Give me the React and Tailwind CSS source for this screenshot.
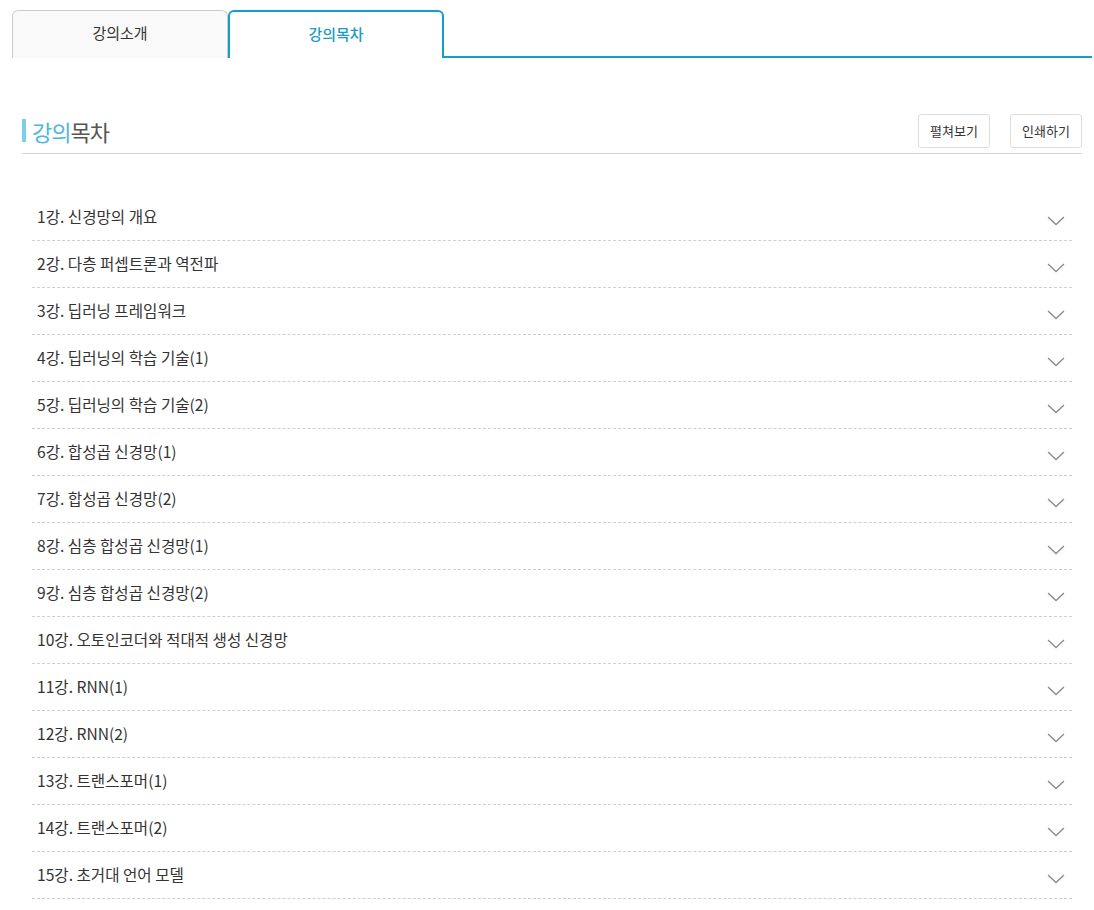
const LECTURES = [
  '1강. 신경망의 개요',
  '2강. 다층 퍼셉트론과 역전파',
  '3강. 딥러닝 프레임워크',
  '4강. 딥러닝의 학습 기술(1)',
  '5강. 딥러닝의 학습 기술(2)',
  '6강. 합성곱 신경망(1)',
  '7강. 합성곱 신경망(2)',
  '8강. 심층 합성곱 신경망(1)',
  '9강. 심층 합성곱 신경망(2)',
  '10강. 오토인코더와 적대적 생성 신경망',
  '11강. RNN(1)',
  '12강. RNN(2)',
  '13강. 트랜스포머(1)',
  '14강. 트랜스포머(2)',
  '15강. 초거대 언어 모델',
];

function Chevron() {
  return (
    <svg width="18" height="10" viewBox="0 0 18 10" className="mt-2 shrink-0">
      <path d="M1 1 L9 8.5 L17 1" fill="none" stroke="#8a8a8a" strokeWidth="1.3" />
    </svg>
  );
}

export default function App() {
  return (
    <div
      className="min-h-[910px] bg-white"
      style={{ fontFamily: '"Noto Sans CJK KR", "Noto Sans", sans-serif' }}
    >
      <div className="pl-3 pr-[2px] pt-[10px]">
        <div className="flex h-[48px] items-stretch border-b-2 border-[#11a0c8]">
          <button className="-mb-[2px] w-[216px] rounded-t-md border border-b-0 border-[#cccccc] bg-[#f9f9f9] text-[15px] text-[#333]">
            <span className="relative -top-[1px]">강의소개</span>
          </button>
          <button className="-mb-[2px] w-[216px] rounded-t-md border-2 border-b-0 border-[#11a0c8] bg-white text-[15px] font-medium text-[#1a9cc4]">
            <span className="relative -top-[1px]">강의목차</span>
          </button>
        </div>
      </div>

      <div className="ml-[22px] mr-3 mt-[56px]">
        <div className="flex items-end justify-between border-b border-[#d4d4d4] pb-[5px]">
          <h2 className="mb-[6px] flex items-center text-[22px] leading-none tracking-[-1px]">
            <span className="mr-[6px] inline-block h-[23px] w-[4px] bg-[#7ccfe6]" />
            <span className="text-[#4db6dd]">강의</span>
            <span className="text-[#555]">목차</span>
          </h2>
          <div className="flex gap-5">
            <button className="h-[34px] w-[72px] rounded-[3px] border border-[#dddddd] bg-white text-[13px] text-[#333]">
              펼쳐보기
            </button>
            <button className="h-[34px] w-[72px] rounded-[3px] border border-[#dddddd] bg-white text-[13px] text-[#333]">
              인쇄하기
            </button>
          </div>
        </div>

        <ul className="mx-[10px] mt-[40px]">
          {LECTURES.map((t) => (
            <li
              key={t}
              className="flex h-[47px] items-center justify-between border-b border-dashed border-[#cfcfcf] pl-[5px] pr-[7px]"
            >
              <span className="text-[15.6px] text-[#333]">{t}</span>
              <Chevron />
            </li>
          ))}
        </ul>
      </div>
    </div>
  );
}
